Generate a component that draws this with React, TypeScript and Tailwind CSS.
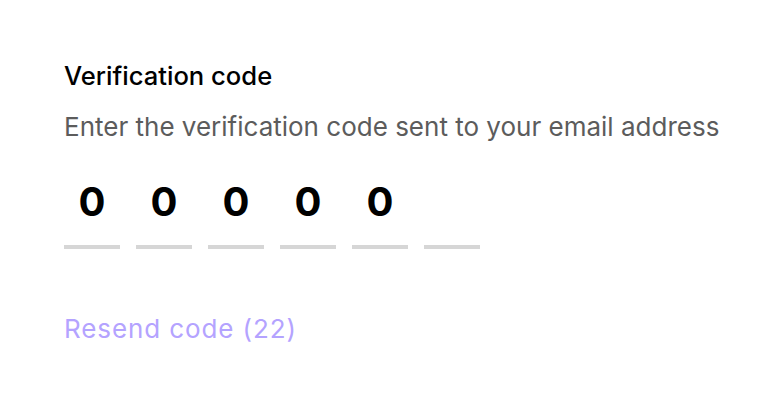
export default function App() {
  const digits = ['0', '0', '0', '0', '0', ''];

  return (
    <div className="min-h-screen bg-white font-['Inter','Liberation_Sans',sans-serif]">
      <div className="px-16 pt-[60px]">
        <h2 className="text-[25.6px] leading-8 font-medium text-black">Verification code</h2>
        <p className="mt-[19px] text-[26px] leading-8 text-[#5c5c5c]">
          Enter the verification code sent to your email address
        </p>
        <div className="mt-[33px] flex gap-4">
          {digits.map((d, i) => (
            <div key={i} className="flex w-14 flex-col items-center">
              <span className="h-[52px] text-[40px] leading-[52px] font-bold text-black">{d}</span>
              <div className="mt-[17px] h-1 w-14 bg-[#d6d6d6]" />
            </div>
          ))}
        </div>
        <button className="mt-[64px] text-[26px] leading-8 tracking-[0.9px] text-[#b4a3ff]">
          Resend code (22)
        </button>
      </div>
    </div>
  );
}
